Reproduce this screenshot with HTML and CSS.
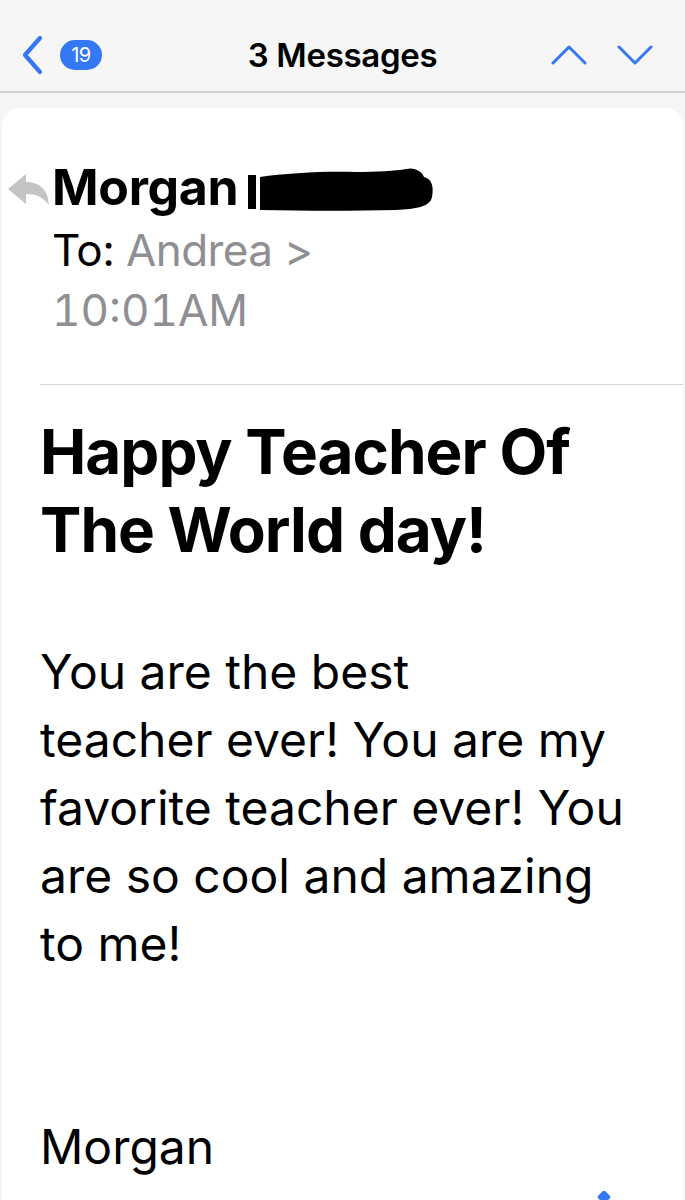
FILE: index.html
```html
<!DOCTYPE html>
<html>
<head>
<meta charset="utf-8">
<link rel="stylesheet" href="styles.css">
</head>
<body>
<header class="nav">
  <div class="nav-left">
    <svg class="back" width="24" height="40" viewBox="0 0 24 40"><path d="M20 3 L5 20 L20 37" fill="none" stroke="#3478f6" stroke-width="4.2" stroke-linecap="round" stroke-linejoin="round"/></svg>
    <span class="badge">19</span>
  </div>
  <div class="nav-title">3 Messages</div>
  <div class="nav-right">
    <svg width="36" height="22" viewBox="0 0 36 22"><path d="M2 19 L18 3 L34 19" fill="none" stroke="#3478f6" stroke-width="3" stroke-linecap="round" stroke-linejoin="round"/></svg>
    <svg width="36" height="22" viewBox="0 0 36 22"><path d="M2 3 L18 19 L34 3" fill="none" stroke="#3478f6" stroke-width="3" stroke-linecap="round" stroke-linejoin="round"/></svg>
  </div>
</header>
<main class="card">
  <section class="meta">
    <svg class="reply" width="42" height="36" viewBox="0 0 42 36"><path d="M0 18 L18 3 L18 11 C30 11 40 17 41 34 C35 26 28 23 18 23 L18 33 Z" fill="#c4c4c6"/></svg>
    <div class="meta-text">
      <div class="from">Morgan <svg class="redact" width="188" height="48" viewBox="0 0 188 48"><path d="M2 10 L10 10 L10 44 L2 44 Z" fill="#000"/><path d="M14 12 C40 8 80 6 110 7 C130 7 150 6 160 4 C168 2 176 6 178 12 C186 14 188 22 186 32 C184 42 170 44 150 45 C110 46 60 46 14 45 Z" fill="#000"/></svg></div>
      <div class="to"><span class="to-label">To:</span> <span class="grey">Andrea &gt;</span></div>
      <div class="time grey">10:01AM</div>
    </div>
  </section>
  <hr class="sep">
  <h1 class="subject">Happy Teacher Of<br>The World day!</h1>
  <p class="body">You are the best<br>teacher ever! You are my<br>favorite teacher ever! You<br>are so cool and amazing<br>to me!</p>
  <p class="sign">Morgan</p>
  <span class="corner"></span>
</main>
</body>
</html>
```

FILE: styles.css
```css
html, body {
  margin: 0;
  padding: 0;
  background: #f6f6f6;
  font-family: Inter, "Liberation Sans", sans-serif;
  color: #000;
  overflow: hidden;
  height: 1200px;
}
.nav {
  height: 93px;
  display: flex;
  align-items: center;
  justify-content: space-between;
  padding: 18px 32px 0 20px;
  border-bottom: 2px solid #cfcfd1;
  position: relative;
  box-sizing: border-box;
}
.nav-left {
  display: flex;
  align-items: center;
  gap: 16px;
}
.badge {
  background: #3478f6;
  color: #fff;
  font-size: 20px;
  border-radius: 15px;
  width: 42px;
  height: 30px;
  display: flex;
  align-items: center;
  justify-content: center;
  letter-spacing: -0.5px;
}
.nav-title {
  position: absolute;
  left: 0;
  right: 0;
  top: 0;
  bottom: 0;
  padding-top: 18px;
  display: flex;
  align-items: center;
  justify-content: center;
  font-size: 33px;
  font-weight: 600;
  letter-spacing: -0.3px;
  pointer-events: none;
}
.nav-right {
  display: flex;
  gap: 30px;
  align-items: center;
}
.card {
  background: #fff;
  margin: 15px 2px 0;
  border-radius: 18px 18px 0 0;
  height: 1100px;
  position: relative;
  padding-top: 51px;
}
.meta {
  display: flex;
  align-items: flex-start;
  padding-left: 6px;
}
.reply {
  margin-top: 12px;
  width: 42px;
  flex: none;
}
.meta-text {
  margin-left: 2px;
}
.from {
  font-size: 50px;
  font-weight: 700;
  line-height: 56px;
  height: 56px;
  letter-spacing: -0.3px;
  display: flex;
  align-items: center;
  gap: 8px;
}
.redact {
  display: block;
  margin-top: 4px;
}
.to, .time {
  font-size: 44px;
  line-height: 60px;
  letter-spacing: -0.6px;
}
.to {
  margin-top: 5px;
}
.time {
  font-variant-numeric: tabular-nums;
  letter-spacing: 0;
}
.grey {
  color: #8e8e93;
}
.sep {
  margin: 44px 0 0 38px;
  border: 0;
  border-top: 1.5px solid #d6d6d8;
}
.subject {
  margin: 28px 0 0 38px;
  font-size: 62px;
  line-height: 78px;
  font-weight: 700;
  letter-spacing: -1px;
}
.body {
  margin: 69px 0 0 38px;
  font-size: 48px;
  line-height: 68px;
}
.sign {
  margin: 135px 0 0 38px;
  font-size: 48px;
  line-height: 68px;
}
.corner {
  position: absolute;
  left: 597px;
  top: 1084px;
  width: 10px;
  height: 10px;
  background: #3478f6;
  border-radius: 2px;
  transform: rotate(45deg);
}
```
